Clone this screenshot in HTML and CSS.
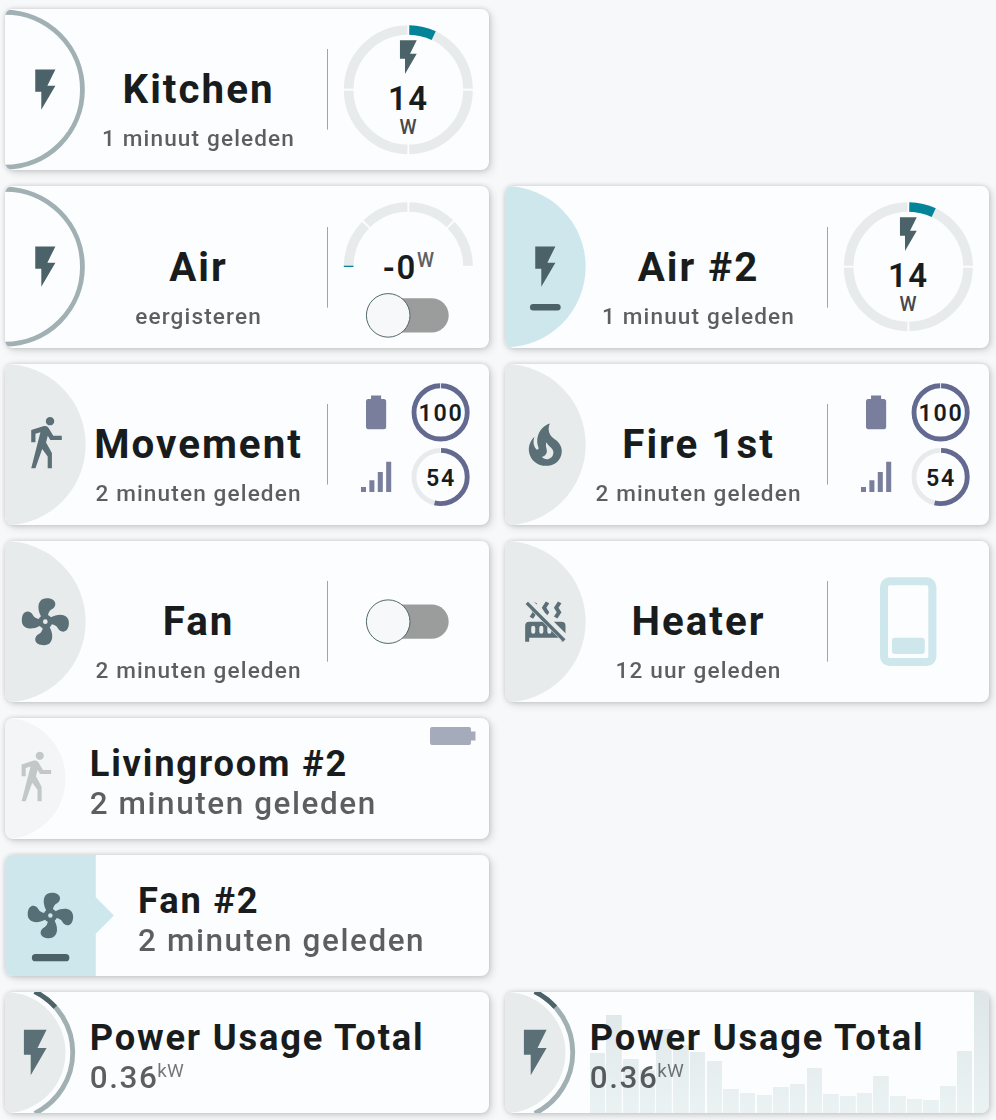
FILE: index.html
```html
<!DOCTYPE html>
<html lang="nl">
<head>
<meta charset="utf-8">
<title>Dashboard</title>
<link rel="stylesheet" href="styles.css">
</head>
<body>
<svg class="defs" aria-hidden="true">
  <symbol id="flash" viewBox="0 0 24 24"><path d="M7,2V13H10V22L17,10H13L17,2H7Z"/></symbol>
  <symbol id="walk" viewBox="0 0 24 24"><path d="M14.12,10H19V8.2H15.38L13.38,4.87C13.08,4.37 12.54,4.03 11.92,4.03C11.74,4.03 11.58,4.06 11.42,4.11L6,5.8V11H7.8V7.33L9.91,6.67L6,22H7.8L10.67,13.89L13,17V22H14.8V15.59L12.31,11.05L13.04,8.18M14,3.8C15,3.8 15.8,3 15.8,2C15.8,1 15,0.2 14,0.2C13,0.2 12.2,1 12.2,2C12.2,3 13,3.8 14,3.8Z"/></symbol>
  <symbol id="fire" viewBox="0 0 24 24"><path d="M17.66 11.2C17.43 10.9 17.15 10.64 16.89 10.38C16.22 9.78 15.46 9.35 14.82 8.72C13.33 7.26 13 4.85 13.95 3C13 3.23 12.17 3.75 11.46 4.32C8.87 6.4 7.85 10.07 9.07 13.22C9.11 13.32 9.15 13.42 9.15 13.55C9.15 13.77 9 13.97 8.8 14.05C8.57 14.15 8.33 14.09 8.14 13.93C8.08 13.88 8.04 13.83 8 13.76C6.87 12.33 6.69 10.28 7.45 8.64C5.78 10 4.87 12.3 5 14.47C5.06 14.97 5.12 15.47 5.29 15.97C5.43 16.57 5.7 17.17 6 17.7C7.08 19.43 8.95 20.67 10.96 20.92C13.1 21.19 15.39 20.8 17.03 19.32C18.86 17.66 19.5 15 18.56 12.72L18.43 12.46C18.22 12 17.66 11.2 17.66 11.2M14.5 17.5C14.22 17.74 13.76 18 13.4 18.1C12.28 18.5 11.16 17.94 10.5 17.28C11.69 17 12.4 16.12 12.61 15.23C12.78 14.43 12.46 13.77 12.33 13C12.21 12.26 12.23 11.63 12.5 10.94C12.69 11.32 12.89 11.7 13.13 12C13.9 13 15.11 13.44 15.37 14.8C15.41 14.94 15.43 15.08 15.43 15.23C15.46 16.05 15.1 16.95 14.5 17.5Z"/></symbol>
  <symbol id="fan" viewBox="0 0 24 24"><path d="M12,11A1,1 0 0,0 11,12A1,1 0 0,0 12,13A1,1 0 0,0 13,12A1,1 0 0,0 12,11M12.5,2C17,2 17.11,5.57 14.75,6.75C13.76,7.24 13.32,8.29 13.13,9.22C13.61,9.42 14.03,9.73 14.35,10.13C18.05,8.13 22.03,8.92 22.03,12.5C22.03,17 18.46,17.1 17.28,14.73C16.78,13.74 15.72,13.3 14.79,13.11C14.59,13.59 14.28,14 13.88,14.34C15.87,18.03 15.08,22 11.5,22C7,22 6.91,18.42 9.27,17.24C10.25,16.75 10.69,15.71 10.89,14.79C10.4,14.59 9.97,14.27 9.65,13.87C5.96,15.85 2,15.07 2,11.5C2,7 5.56,6.89 6.74,9.26C7.24,10.25 8.29,10.68 9.22,10.87C9.41,10.39 9.73,9.97 10.14,9.65C8.15,5.96 8.94,2 12.5,2Z"/></symbol>
  <symbol id="radiator-off" viewBox="0 0 24 24">
    <mask id="cut"><rect width="24" height="24" fill="#fff"/><path d="M5.2 1L25 20.8L21.4 22.8L1.6 3Z" fill="#000"/></mask>
    <g mask="url(#cut)">
      <path d="M7.95,3L6.53,5.19L7.95,7.4L5.95,10.5L4.22,9.6L5.64,7.39L4.22,5.19L6.22,2.09L7.95,3M13.95,2.89L12.53,5.1L13.95,7.3L11.95,10.4L10.22,9.5L11.64,7.3L10.22,5.1L12.22,2L13.95,2.89M20,2.89L18.56,5.1L20,7.3L18,10.4L16.25,9.5L17.67,7.3L16.25,5.1L18.25,2L20,2.89"/>
      <path fill-rule="evenodd" d="M2,22V14A2,2 0 0,1 4,12H20A2,2 0 0,1 22,14V22H20V20H4V22H2M6,14A1,1 0 0,0 5,15V17A1,1 0 0,0 7,17V15A1,1 0 0,0 6,14M10,14A1,1 0 0,0 9,15V17A1,1 0 0,0 11,17V15A1,1 0 0,0 10,14M14,14A1,1 0 0,0 13,15V17A1,1 0 0,0 15,17V15A1,1 0 0,0 14,14"/>
    </g>
    <path d="M3.4 2.1L22 20.7L20.8 21.9L2.2 3.3Z"/>
  </symbol>
  <symbol id="battery" viewBox="0 0 24 24"><path d="M16.67,4H15V2H9V4H7.33A1.33,1.33 0 0,0 6,5.33V20.67C6,21.4 6.6,22 7.33,22H16.67A1.33,1.33 0 0,0 18,20.67V5.33C18,4.6 17.4,4 16.67,4Z"/></symbol>
  <symbol id="signal" viewBox="0 0 24 24"><path d="M3,21H6V18H3M8,21H11V14H8M13,21H16V9H13M18,21H21V3H18V21Z"/></symbol>
  <symbol id="switch" viewBox="0 0 60 30"><rect class="sw-track" x="5" y="4.4" width="50" height="21.2" rx="10.6"/><circle class="sw-thumb" cx="17.5" cy="15" r="13.5"/></symbol>
  <symbol id="dial" viewBox="0 0 100 100">
    <circle class="track" cx="50" cy="50" r="37" stroke-width="6" pathLength="360" stroke-dasharray="88.2 1.8" stroke-dashoffset="-.9" transform="rotate(-90 50 50)"/>
    <circle class="teal" cx="50" cy="50" r="37" stroke-width="6" pathLength="360" stroke-dasharray="24.3 400" stroke-dashoffset="-.9" transform="rotate(-90 50 50)"/>
    <use href="#flash" class="ink" x="37.5" y="17.3" width="25" height="25"/>
  </symbol>
  <symbol id="levels" viewBox="0 0 100 100">
    <use href="#battery" class="violet-icon" x="17.5" y="17.5" width="25" height="25"/>
    <use href="#signal" class="violet-icon" x="17.5" y="57.5" width="25" height="25"/>
    <circle class="violet" cx="70" cy="30" r="16.5" stroke-width="3" pathLength="360" stroke-dasharray="358 2" stroke-dashoffset="-1" transform="rotate(-90 70 30)"/>
    <circle class="track" cx="70" cy="70" r="16.5" stroke-width="3" pathLength="360" stroke-dasharray="358 2" stroke-dashoffset="-1" transform="rotate(-90 70 70)"/>
    <circle class="violet" cx="70" cy="70" r="16.5" stroke-width="3" pathLength="360" stroke-dasharray="192.4 400" stroke-dashoffset="-1" transform="rotate(-90 70 70)"/>
  </symbol>
  <symbol id="power-badge" viewBox="0 0 60 100">
    <circle class="disc" cx="0" cy="50" r="50"/>
    <path class="ring" stroke-width="4" d="M24.55 -.33A56 56 0 0 1 24.55 100.33"/>
    <path class="ring-value" stroke-width="4" d="M24.55 -.33A56 56 0 0 1 41.6 12.5"/>
    <use href="#flash" class="slate" x="2.5" y="27.5" width="45" height="45"/>
  </symbol>
</svg>

<main class="board">
  <article class="card">
    <svg class="badge" viewBox="0 0 50 100"><circle class="ring" cx="0" cy="50" r="48" stroke-width="3"/><use href="#flash" class="ink" x="10" y="35" width="30" height="30"/></svg>
    <div class="label"><h2>Kitchen</h2><p>1 minuut geleden</p></div>
    <svg class="panel" viewBox="0 0 100 100"><use href="#dial"/><text class="num" x="50" y="62.9">14</text><text class="unit" x="49.8" y="77.6">W</text></svg>
  </article>

  <article class="card start">
    <svg class="badge" viewBox="0 0 50 100"><circle class="ring" cx="0" cy="50" r="48" stroke-width="3"/><use href="#flash" class="ink" x="10" y="35" width="30" height="30"/></svg>
    <div class="label"><h2>Air</h2><p>eergisteren</p></div>
    <svg class="panel" viewBox="0 0 100 100">
      <path class="track" stroke-width="6" pathLength="180" stroke-dasharray="43.2 1.8" stroke-dashoffset="-.9" d="M13 50A37 37 0 0 1 87 50"/>
      <rect class="teal-fill" x="10" y="49.4" width="6" height=".8"/>
      <text class="num" x="50" y="57.7">-0<tspan class="sup" dy="-7.2">W</tspan></text>
      <use href="#switch" x="20" y="65.2" width="60" height="30"/>
    </svg>
  </article>
  <article class="card">
    <svg class="badge" viewBox="0 0 50 100"><circle class="disc on" cx="0" cy="50" r="50"/><use href="#flash" class="ink" x="10" y="35" width="30" height="30"/><rect class="ink" x="15.5" y="73.2" width="19" height="4" rx="2"/></svg>
    <div class="label"><h2>Air #2</h2><p>1 minuut geleden</p></div>
    <svg class="panel" viewBox="0 0 100 100"><use href="#dial"/><text class="num" x="50" y="62.9">14</text><text class="unit" x="49.8" y="77.6">W</text></svg>
  </article>

  <article class="card">
    <svg class="badge" viewBox="0 0 50 100"><circle class="disc" cx="0" cy="50" r="50"/><use href="#walk" class="slate" x="7.5" y="32.5" width="35" height="35"/></svg>
    <div class="label"><h2>Movement</h2><p>2 minuten geleden</p></div>
    <svg class="panel" viewBox="0 0 100 100"><use href="#levels"/><text class="small" x="70.2" y="35.3">100</text><text class="small" x="70.2" y="75.5">54</text></svg>
  </article>
  <article class="card">
    <svg class="badge" viewBox="0 0 50 100"><circle class="disc" cx="0" cy="50" r="50"/><use href="#fire" class="slate" x="7.5" y="32.5" width="35" height="35"/></svg>
    <div class="label"><h2>Fire 1st</h2><p>2 minuten geleden</p></div>
    <svg class="panel" viewBox="0 0 100 100"><use href="#levels"/><text class="small" x="70.2" y="35.3">100</text><text class="small" x="70.2" y="75.5">54</text></svg>
  </article>

  <article class="card">
    <svg class="badge" viewBox="0 0 50 100"><circle class="disc" cx="0" cy="50" r="50"/><use href="#fan" class="slate" x="7.5" y="32.5" width="35" height="35"/></svg>
    <div class="label"><h2>Fan</h2><p>2 minuten geleden</p></div>
    <svg class="panel" viewBox="0 0 100 100"><use href="#switch" x="20" y="35" width="60" height="30"/></svg>
  </article>
  <article class="card">
    <svg class="badge" viewBox="0 0 50 100"><circle class="disc" cx="0" cy="50" r="50"/><use href="#radiator-off" class="slate" x="10" y="35" width="30" height="30"/></svg>
    <div class="label"><h2>Heater</h2><p>12 uur geleden</p></div>
    <svg class="panel" viewBox="0 0 100 100"><rect class="rocker" x="34.9" y="25" width="30" height="50" rx="3.5" stroke-width="5"/><rect class="rocker-key" x="39.8" y="60" width="20.4" height="10" rx="2"/></svg>
  </article>

  <article class="card low start">
    <svg class="badge" viewBox="0 0 50 100"><g class="faded"><circle class="disc" cx="0" cy="50" r="50"/><use href="#walk" class="dim" x="2.5" y="27.5" width="45" height="45"/></g></svg>
    <div class="label"><h2>Livingroom #2</h2><p>2 minuten geleden</p></div>
    <svg class="cell" viewBox="0 0 46 18"><path d="M2 0H39A2 2 0 0 1 41 2V4.5H45.5V13.5H41V16A2 2 0 0 1 39 18H2A2 2 0 0 1 0 16V2A2 2 0 0 1 2 0Z"/></svg>
  </article>

  <article class="card low start">
    <svg class="badge wide" viewBox="0 0 90 100"><path class="disc on" d="M0 0H75V35L90 50L75 65V100H0Z"/><use href="#fan" class="slate deep" x="15" y="27.5" width="45" height="45"/><rect class="ink" x="22.2" y="81.9" width="31" height="6" rx="3"/></svg>
    <div class="label"><h2>Fan #2</h2><p>2 minuten geleden</p></div>
  </article>

  <article class="card low start">
    <svg class="badge power" viewBox="0 0 60 100"><use href="#power-badge"/></svg>
    <div class="label"><h2>Power Usage Total</h2><p>0.36<span class="kw">kW</span></p></div>
  </article>
  <article class="card low">
    <svg class="badge power" viewBox="0 0 60 100"><use href="#power-badge"/></svg>
    <div class="label"><h2>Power Usage Total</h2><p>0.36<span class="kw">kW</span></p></div>
    <div class="history">
      <i style="height:60.3px"></i><i style="height:98px"></i><i style="height:54.7px"></i><i style="height:43px"></i><i style="height:84px"></i><i style="height:68px"></i><i style="height:61px"></i><i style="height:52.3px"></i><i style="height:24px"></i><i style="height:20px"></i><i style="height:18px"></i><i style="height:26px"></i><i style="height:29px"></i><i style="height:45px"></i><i style="height:19.3px"></i><i style="height:17px"></i><i style="height:20px"></i><i style="height:37.3px"></i><i style="height:17px"></i><i style="height:14.3px"></i><i style="height:13.3px"></i><i style="height:27px"></i><i style="height:62px"></i><i style="height:121px"></i>
    </div>
  </article>
</main>
</body>
</html>
```

FILE: styles.css
```css
* { box-sizing: border-box; }

body {
  margin: 0;
  min-height: 1120px;
  background: #f7f8fa;
  font-family: Roboto, "Liberation Sans", sans-serif;
  color: #191c1d;
}

.defs { position: absolute; width: 0; height: 0; }

.board {
  display: grid;
  grid-template-columns: 484px 484px;
  gap: 16px;
  padding: 9px 0 7px 5px;
}

.card {
  position: relative;
  display: flex;
  height: 161.33px;
  overflow: hidden;
  border-radius: 8px;
  background: #fcfdff;
  box-shadow: 0 0 5px rgba(0, 0, 0, .17), 3px 3px 8px rgba(0, 0, 0, .12);
}

.card.low { height: 121px; }
.start { grid-column: 1; }

.badge { flex: none; width: 80.67px; height: 161.33px; }
.low .badge { width: 60.5px; height: 121px; }
.low .badge.wide { width: 108.9px; }
.low .badge.power { width: 72.6px; }

.label { flex: none; width: 225.8px; padding-top: 57.3px; text-align: center; }
.low .label { width: auto; margin-left: 24.2px; padding-top: 24.8px; text-align: left; position: relative; z-index: 1; }
.low .power + .label { margin-left: 12.1px; }

h2, p { margin: 0; white-space: nowrap; }
h2 { font-size: 40.33px; line-height: 48px; font-weight: 700; letter-spacing: .05em; }
p { margin-top: 11px; font-size: 22.6px; line-height: 27px; font-weight: 500; letter-spacing: .05em; opacity: .7; }
.low h2 { font-size: 36.3px; line-height: 42px; }
.low p { margin-top: 1px; font-size: 31.46px; line-height: 36px; letter-spacing: .05em; }
.kw { margin-left: -1px; font-size: 18.9px; line-height: 0; font-weight: 400; letter-spacing: 0; vertical-align: 11px; opacity: .85; }

.panel {
  flex: none;
  width: 162.03px;
  height: 161.33px;
  margin-left: 15.7px;
  padding-left: .7px;
  background: linear-gradient(#a2a4a6, #a2a4a6) 0 40.3px / 1px 80.67px no-repeat;
}

text { text-anchor: middle; letter-spacing: .05em; fill: #191c1d; font-weight: 600; }
.num { font-size: 20.4px; }
.unit { font-size: 12px; font-weight: 500; fill: #47494a; letter-spacing: 0; }
.sup { font-size: 12px; font-weight: 500; fill: #5e6061; letter-spacing: 0; }
.small { font-size: 14.4px; letter-spacing: .07em; }

.ink { fill: #4b6268; }
.slate { fill: #5b6f76; }
.slate.deep { fill: #566e75; }
.dim { fill: #7c8689; }
.faded { opacity: .45; }
.disc { fill: #e8ebec; }
.disc.on { fill: #cde7ed; }
.ring, .ring-value, .track, .teal, .violet { fill: none; }
.ring { stroke: #a1b0b3; }
.ring-value { stroke: #4b6268; }
.track { stroke: #e8ebec; }
.teal { stroke: #038498; }
.teal-fill { fill: #038498; }
.violet { stroke: #646a8f; }
.violet-icon { fill: #787e9b; }
.sw-track { fill: #9b9d9c; }
.sw-thumb { fill: #f7f8fa; stroke: #4b6268; stroke-width: .6; }
.rocker { fill: none; stroke: #cde7ed; }
.rocker-key { fill: #cde7ed; }

.cell { width: 46px; height: 18px; margin: 9px 13px 0 auto; fill: #a6abbb; }

.history {
  position: absolute;
  right: 0;
  bottom: 0;
  width: 399.3px;
  height: 121px;
  display: grid;
  grid-template-columns: repeat(24, 1fr);
  column-gap: 1.2px;
  align-items: end;
}
.history i { background: linear-gradient(#dfe6e8, #eaf2f4) bottom / 100% 121px; }
```
